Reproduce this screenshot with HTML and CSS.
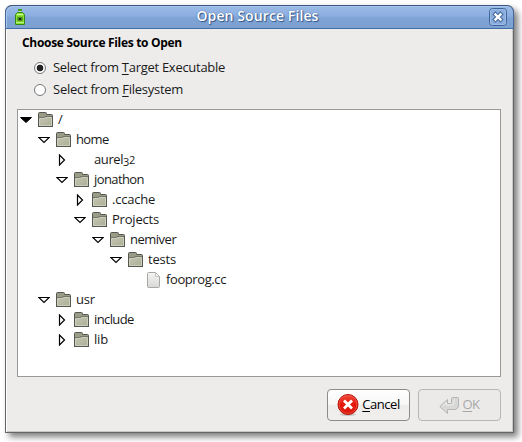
FILE: index.html
```html
<!DOCTYPE html>
<html lang="en">
<head>
<meta charset="utf-8">
<title>Open Source Files</title>
<link rel="stylesheet" href="styles.css">
</head>
<body>
<svg class="defs" width="0" height="0" aria-hidden="true">
  <defs>
    <linearGradient id="gFolder" x1="0" y1="0" x2="1" y2="1"><stop offset="0" stop-color="#c3c5b1"/><stop offset="1" stop-color="#adaf96"/></linearGradient>
    <linearGradient id="gPage" x1="0" y1="0" x2="0" y2="1"><stop offset="0" stop-color="#f5f5f4"/><stop offset="1" stop-color="#d8d8d6"/></linearGradient>
    <linearGradient id="gRed" x1="0" y1="0" x2="0" y2="1"><stop offset="0" stop-color="#f0493a"/><stop offset=".5" stop-color="#e4180c"/><stop offset="1" stop-color="#d91a0c"/></linearGradient>
    <symbol id="folder" viewBox="0 0 16 16">
      <path d="M.5 14.500V1.500Q.5.500 1.500.500H7.500Q8.500.500 8.500 1.500V2.500H13.500Q14.500 2.500 14.500 3.500V14.500Z" fill="#9a9c88" stroke="#555751"/>
      <path d="M1 5.500H5.500L7 4.500H14" fill="none" stroke="#74766a"/>
      <path d="M1.500 13.500V6.500H6.500L8 5.500H13.500V13.500Z" fill="url(#gFolder)" stroke="#cbcdbd"/>
      <path d="M0 14.500H15" stroke="#555751"/>
    </symbol>
    <symbol id="down" viewBox="0 0 12 12"><path d="M.8 3.500H11.200L6 8.500Z" fill="#fff" stroke="#000" stroke-width="1.200"/></symbol>
    <symbol id="down-full" viewBox="0 0 12 12"><path d="M.5 3.500H11.500L6 8.500Z" stroke="#000"/></symbol>
    <symbol id="right" viewBox="0 0 12 12"><path d="M3.500 1V11L8.500 6Z" fill="#fff" stroke="#000" stroke-width="1.200"/></symbol>
  </defs>
</svg>
<main class="window">
  <header class="titlebar">
    <svg class="app-icon" width="10" height="16" viewBox="0 0 10 16">
      <rect x="3" y="0" width="4" height="2" fill="#3d9e16"/>
      <rect x="4" y="2" width="2" height="2" fill="#c6ec9c"/>
      <path d="M.5 5.500L2.500 3.500H7.500L9.500 5.500V15.500H.5Z" fill="#8be331" stroke="#348815"/>
      <path d="M2 5.500H8" stroke="#d1f7a7"/>
      <path d="M1 13.500H9" stroke="#b9ef82"/>
      <path d="M2.500 8L7.500 12M7.500 8L2.500 12M2 10H8M5 7.500V12.500" stroke="#1b430f" stroke-width=".9"/>
      <rect x="4" y="9" width="2" height="2" fill="#122f0c"/>
    </svg>
    <h1 class="title">Open Source Files</h1>
    <svg class="close" width="18" height="18" viewBox="0 0 18 18">
      <rect x=".5" y=".5" width="17" height="17" rx="3" fill="#8aaddd" stroke="#3f669c"/>
      <rect x="1.500" y="1.500" width="15" height="15" rx="2" fill="none" stroke="#9bbae4"/>
      <path d="M6.500 6.500L11.500 11.500M11.500 6.500L6.500 11.500" stroke="#456a9f" stroke-width="4.500" stroke-linecap="square"/>
      <path d="M6.500 6.500L11.500 11.500M11.500 6.500L6.500 11.500" stroke="#fff" stroke-width="2.400" stroke-linecap="square"/>
    </svg>
  </header>
  <section class="content">
    <h2 class="heading">Choose Source Files to Open</h2>
    <div class="option"><span class="radio checked"></span><span class="label target">Select from <u>T</u>arget Executable</span></div>
    <div class="option"><span class="radio"></span><span class="label filesystem">Select from <u>F</u>ilesystem</span></div>
    <div class="tree">
      <div class="row"><svg class="arrow"><use href="#down-full"/></svg><svg class="icon"><use href="#folder"/></svg><span class="name">/</span></div>
      <div class="row l1"><svg class="arrow"><use href="#down"/></svg><svg class="icon"><use href="#folder"/></svg><span class="name home">home</span></div>
      <div class="row l2"><svg class="arrow"><use href="#right"/></svg><span class="icon"></span><span class="name aurel">aurel<span class="three">3</span><span class="two">2</span></span></div>
      <div class="row l2"><svg class="arrow"><use href="#down"/></svg><svg class="icon"><use href="#folder"/></svg><span class="name jonathon">jonathon</span></div>
      <div class="row l3"><svg class="arrow"><use href="#right"/></svg><svg class="icon"><use href="#folder"/></svg><span class="name">.ccache</span></div>
      <div class="row l3"><svg class="arrow"><use href="#down"/></svg><svg class="icon"><use href="#folder"/></svg><span class="name">Projects</span></div>
      <div class="row l4"><svg class="arrow"><use href="#down"/></svg><svg class="icon"><use href="#folder"/></svg><span class="name nemiver">nemiver</span></div>
      <div class="row l5"><svg class="arrow"><use href="#down"/></svg><svg class="icon"><use href="#folder"/></svg><span class="name">tests</span></div>
      <div class="row l6"><span class="arrow"></span><svg class="icon" viewBox="0 0 16 16"><path d="M1.500 1.500Q1.500.500 2.500.500H9.500L13.500 4.500V14.500Q13.500 15.500 12.500 15.500H2.500Q1.500 15.500 1.500 14.500Z" fill="url(#gPage)" stroke="#a8a8a6"/><path d="M9.500 1V4.500H13" fill="#fff" stroke="#c5c5c3"/></svg><span class="name fooprog">fooprog.cc</span></div>
      <div class="row l1"><svg class="arrow"><use href="#down"/></svg><svg class="icon"><use href="#folder"/></svg><span class="name">usr</span></div>
      <div class="row l2"><svg class="arrow"><use href="#right"/></svg><svg class="icon"><use href="#folder"/></svg><span class="name include">include</span></div>
      <div class="row l2"><svg class="arrow"><use href="#right"/></svg><svg class="icon"><use href="#folder"/></svg><span class="name">lib</span></div>
    </div>
    <footer class="actions">
      <button class="button cancel"><svg width="22" height="22" viewBox="0 0 22 22"><ellipse cx="11" cy="20.500" rx="8" ry="1.500" fill="#999" opacity=".5"/><circle cx="11" cy="10.500" r="10" fill="url(#gRed)" stroke="#b51005"/><circle cx="11" cy="10.500" r="8.900" fill="none" stroke="#f4665a" stroke-width=".6"/><path d="M7 6.500L15 14.500M15 6.500L7 14.500" stroke="#fff" stroke-width="2.800"/></svg><span class="caption"><u>C</u>ancel</span></button>
      <button class="button ok" disabled><svg width="20" height="19" viewBox="0 0 20 19"><path d="M.8 10.500L8.500 3.500V7.500H11.500Q12.500 7.500 12.500 6.500V2.500Q12.500 1.500 13.500 1.500H18.500Q19.500 1.500 19.500 2.500V9Q19.500 13.500 15 13.500H8.500V17.500Z" fill="#d8d8d7" stroke="#b5b5b4"/><path d="M3 10.500L7.500 6.500V9H13Q15 9 15 6.500V3.500" fill="none" stroke="#ededec"/></svg><span class="caption"><u>O</u>K</span></button>
    </footer>
  </section>
</main>
</body>
</html>
```
FILE: styles.css
```css
* { box-sizing: border-box; }
body { margin: 0; padding: 5px; width: 522px; height: 442px; overflow: hidden; background: #fff; color: #1a1a1a; font: 13px/20px "Open Sans", "Noto Sans", sans-serif; }
.defs { position: absolute; }
.window { width: 509px; height: 428px; border: 1px solid #656565; border-top: 0; border-radius: 7px 7px 0 0; background: #edeceb; box-shadow: inset 1px 0 #fff, inset -1px -1px #c9c8c7, 4px 4px 6px rgba(0,0,0,.5); }
.titlebar { display: flex; align-items: center; height: 24px; margin: 0 -1px; padding: 0 5px 0 10px; border: 1px solid #41679c; border-top-color: #3b5681; border-bottom-color: #426da8; border-radius: 7px 7px 0 0; background: linear-gradient(#9cbbe6, #8bade0 45%, #7ea3d5 55%, #7ca1d0); box-shadow: inset 1px 1px #a9c5ec; }
.app-icon { flex: none; margin-left: -1px; }
.title { flex: 1; margin: -2px 0 0; padding-left: 1px; text-align: center; color: #fff; font-size: 14px; font-weight: 600; line-height: 20px; letter-spacing: .1px; text-shadow: 0 0 1px #31578c, 1px 1px 1px #31578c; }
.close { flex: none; margin-right: 1px; }
.content { padding: 4px 12px 0 11px; }
.heading { margin: 0 0 4px 5px; font-size: 12px; line-height: 20px; letter-spacing: -.31px; color: #000; }
.option { display: flex; align-items: center; height: 22px; padding-left: 17px; }
.label { margin: -3px 0 0 7px; }
.target { letter-spacing: -.28px; }
.filesystem { letter-spacing: -.25px; }
u { text-decoration: underline; text-decoration-thickness: 1px; text-underline-offset: 2px; text-decoration-skip-ink: none; }
.radio { width: 12px; height: 12px; border: 1px solid #777; border-radius: 50%; background: #fff; }
.checked { background: radial-gradient(circle, #222 0 3px, #fff 3.7px); }
.tree { height: 268px; margin-top: 8px; border: 1px solid #999895; background: #fff; }
.row { display: flex; align-items: center; height: 20px; padding-left: 2px; letter-spacing: -.2px; }
.name { margin-top: -3px; }
.home { letter-spacing: -.6px; }
.jonathon { letter-spacing: -.6px; }
.nemiver { letter-spacing: -.5px; }
.include { letter-spacing: -.6px; }
.fooprog { letter-spacing: -.4px; }
.aurel { letter-spacing: -.4px; }
.arrow { flex: none; width: 12px; height: 12px; }
.icon { flex: none; width: 16px; height: 16px; margin: 0 4px 0 6px; }
.l1 { padding-left: 20px; }
.l2 { padding-left: 38px; }
.l3 { padding-left: 56px; }
.l4 { padding-left: 74px; }
.l5 { padding-left: 92px; }
.l6 { padding-left: 110px; }
.three, .two { display: inline-block; line-height: 1; font-size: 11px; }
.three { transform: translateY(2px); }
.actions { display: flex; justify-content: flex-end; gap: 8px; margin: 12px 0 0; }
.button { display: flex; align-items: center; justify-content: center; gap: 3px; width: 83px; height: 32px; padding: 0; border: 1px solid #8d8b88; border-radius: 4px; background: linear-gradient(#fff, #f7f7f6 50%, #eeedec 51%, #f0efee); color: #000; font: inherit; letter-spacing: -.45px; }
.caption { margin-top: -3px; }
.button:disabled { border-color: #b9b7b5; background: #ebeae9; color: #a9a9a8; }
```
